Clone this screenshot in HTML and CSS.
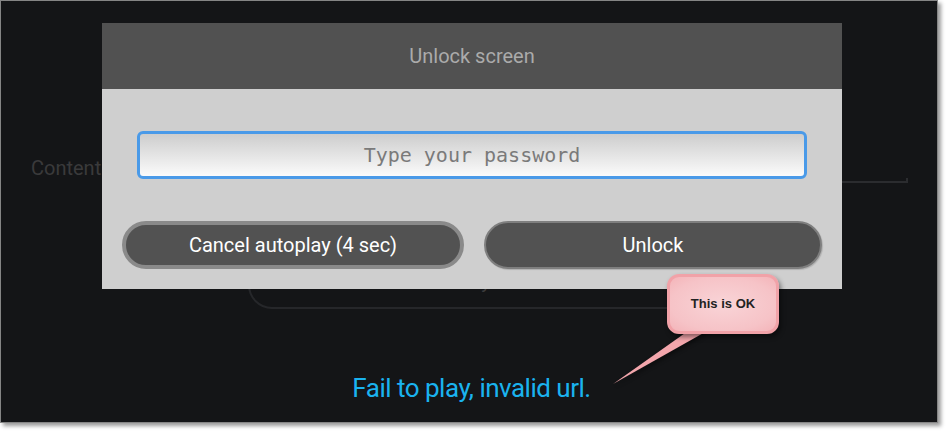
FILE: index.html
```html
<!DOCTYPE html>
<html>
<head>
<meta charset="utf-8">
<link rel="stylesheet" href="styles.css">
</head>
<body>
<div class="frame">
  <div class="row">
    <span class="label">Content</span>
    <div class="field"></div>
  </div>
  <div class="play">Play</div>
  <div class="fail">Fail to play, invalid url.</div>

  <div class="dialog">
    <div class="dialog-head">Unlock screen</div>
    <div class="dialog-body">
      <input class="pw" type="text" placeholder="Type your password">
      <div class="btns">
        <div class="btn btn-cancel">Cancel autoplay (4 sec)</div>
        <div class="btn btn-unlock">Unlock</div>
      </div>
    </div>
  </div>

  <svg class="tail" width="110" height="62" viewBox="0 0 110 62">
    <polygon points="82,2 101,2 7,55" fill="#f3a6ac"/>
  </svg>
  <div class="callout">This is OK</div>
</div>
</body>
</html>
```
FILE: styles.css
```css
html, body {
  margin: 0;
  padding: 0;
  background: #ffffff;
}
body {
  width: 946px;
  height: 431px;
  overflow: hidden;
}
.frame {
  position: relative;
  box-sizing: border-box;
  width: 938px;
  height: 423px;
  border: 1px solid #858585;
  background: #141517;
  box-shadow: 3px 3px 4px rgba(0, 0, 0, 0.4);
  padding: 0 29px 0 30px;
  display: flex;
  flex-direction: column;
  font-family: Roboto, "Liberation Sans", sans-serif;
}
.row {
  display: flex;
  align-items: flex-start;
  margin-top: 155px;
}
.label {
  font-size: 20px;
  line-height: 24px;
  color: #3a3a3b;
  margin-right: 16px;
}
.field {
  flex: 1;
  margin-top: 22px;
  height: 3px;
  border: 2px solid #2b2c2f;
  border-top: 0;
}
.play {
  align-self: flex-start;
  margin-top: 70px;
  margin-left: 217px;
  box-sizing: border-box;
  width: 448px;
  height: 56px;
  border: 2px solid #26272a;
  border-radius: 24px;
  font-size: 20px;
  line-height: 52px;
  text-align: center;
  color: #3b3b3c;
}
.fail {
  margin-top: 64px;
  padding-left: 4px;
  font-size: 26px;
  line-height: 30px;
  letter-spacing: -0.5px;
  text-align: center;
  color: #1ab3ef;
}
.dialog {
  position: absolute;
  left: 101px;
  top: 22px;
  width: 740px;
  height: 266px;
  display: flex;
  flex-direction: column;
  background: #cfcfcf;
}
.dialog-head {
  height: 66px;
  box-sizing: border-box;
  padding-top: 1px;
  background: #515151;
  color: #ababab;
  font-size: 20px;
  line-height: 65px;
  text-align: center;
}
.dialog-body {
  flex: 1;
  display: flex;
  flex-direction: column;
  padding: 42px 20px 20px;
}
.pw {
  margin: 0 15px;
  box-sizing: border-box;
  height: 48px;
  border: 3px solid #4a9ae8;
  border-radius: 6px;
  background: linear-gradient(#cdcdcd, #fbfbfb);
  font-family: "DejaVu Sans Mono", monospace;
  font-size: 20px;
  text-align: center;
  outline: none;
  padding: 0;
}
.pw::placeholder {
  color: #7a7a7a;
  opacity: 1;
}
.btns {
  display: flex;
  gap: 20px;
  margin-top: 42px;
}
.btn {
  flex: 1;
  box-sizing: border-box;
  height: 48px;
  border-radius: 24px;
  background: #525252;
  color: #ffffff;
  font-size: 20px;
  text-align: center;
  display: flex;
  align-items: center;
  justify-content: center;
}
.btn-cancel {
  border: 4px solid #8a8a8a;
}
.btn-unlock {
  border: 2px solid #7f7f7f;
  box-shadow: 1px 1px 1px rgba(0, 0, 0, 0.15);
}
.tail {
  position: absolute;
  left: 605px;
  top: 328px;
  filter: drop-shadow(2px 2px 2px rgba(0, 0, 0, 0.45));
}
.callout {
  position: absolute;
  left: 666px;
  top: 273px;
  box-sizing: border-box;
  width: 112px;
  height: 60px;
  border: 3px solid #f1a2a8;
  border-radius: 12px;
  background: radial-gradient(ellipse at center, #f9d4d7 0%, #f6c3c7 70%, #f4b4b9 100%);
  box-shadow: 2px 3px 5px rgba(0, 0, 0, 0.45);
  font-family: "Liberation Sans", Arial, sans-serif;
  font-weight: bold;
  font-size: 13px;
  color: #222222;
  display: flex;
  align-items: center;
  justify-content: center;
  padding-bottom: 2px;
}
```
